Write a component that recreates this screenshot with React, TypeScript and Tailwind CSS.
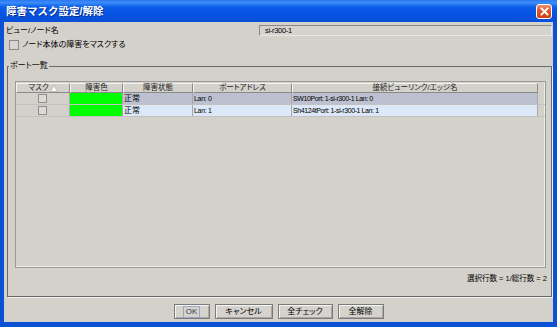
import React from 'react'

const ui = "[font-family:'Liberation_Sans','Noto_Sans_CJK_JP',sans-serif] [font-feature-settings:'palt']"

const columns = [
  { key: 'mask', label: 'マスク', w: 'w-[54px]' },
  { key: 'color', label: '障害色', w: 'w-[53px]' },
  { key: 'state', label: '障害状態', w: 'w-[70px]' },
  { key: 'addr', label: 'ポートアドレス', w: 'w-[99px]' },
  { key: 'link', label: '接続ビューリンク/エッジ名', w: 'w-[246px]' },
]

const rows = [
  { state: '正常', addr: 'Lan: 0', link: 'SW10Port: 1-si-r300-1 Lan: 0', bg: 'bg-[#bdc1cf]' },
  { state: '正常', addr: 'Lan: 1', link: 'Sh4124tPort: 1-si-r300-1 Lan: 1', bg: 'bg-[#dce8f7]' },
]

function SmallCheck() {
  return <span className="block w-[9px] h-[9px] border border-[#8e8e8e] bg-[#dcdad6]" />
}

function SortUp() {
  return (
    <svg width="8" height="7" viewBox="0 0 8 7" className="ml-[1px]">
      <polygon points="4,0.5 7.5,6.5 0.5,6.5" fill="#ffffff" stroke="#b0b0b0" strokeWidth="0.8" />
    </svg>
  )
}

function Button({ children, focus, w }: { children: React.ReactNode; focus?: boolean; w: string }) {
  return (
    <button className={`${ui} ${w} h-[15px] flex items-center justify-center border border-[#7b7b7b] bg-[#d6d3ce] shadow-[inset_1px_1px_0_#f4f4f4,inset_-1px_-1px_0_#a8a8a8] text-[8px] leading-none text-black px-0`}>
      {focus ? (
        <span className="px-[2px] py-[1px] outline outline-1 outline-[#9aa6c8] text-[#3a3a3a]">{children}</span>
      ) : (
        children
      )}
    </button>
  )
}

export default function App() {
  return (
    <div className={`${ui} w-[557px] h-[327px] flex flex-col bg-[#0b51d4] overflow-hidden`}>
      {/* title bar */}
      <div className="h-[22px] shrink-0 flex items-center pl-[6px] pr-[5px] bg-[linear-gradient(to_bottom,#2a78f0_0%,#3b8cf8_12%,#0c5ee8_32%,#0553e2_65%,#0a4fd6_100%)]">
        <span className="text-white font-bold text-[10.5px] leading-none [font-feature-settings:normal] [text-shadow:1px_1px_0_#0a2f90]">
          障害マスク設定/解除
        </span>
        <div className="ml-auto w-[16px] h-[15px] rounded-[3px] border border-white bg-[linear-gradient(to_bottom,#f09070,#e0552c_45%,#d04018)] flex items-center justify-center">
          <svg width="9" height="9" viewBox="0 0 9 9">
            <path d="M1.5 1.5 L7.5 7.5 M7.5 1.5 L1.5 7.5" stroke="#ffffff" strokeWidth="1.8" strokeLinecap="square" />
          </svg>
        </div>
      </div>

      {/* body */}
      <div className="flex-1 mx-[4px] mb-[5px] bg-[#d4d1cb] flex flex-col text-black">
        <div className="mt-[3px] h-[11px] flex items-center">
          <span className="pl-[2px] text-[8px] leading-none">ビュー/ノード名</span>
          <div className="ml-auto mr-[1px] w-[293px] h-[11px] border border-[#8a8a8a] border-r-[#e8e8e8] border-b-[#e8e8e8] bg-[#d6d3ce] flex items-center pl-[5px] text-[7.5px] leading-none tracking-[-0.3px]">
            si-r300-1
          </div>
        </div>

        <div className="mt-[4px] h-[10px] flex items-center pl-[5px]">
          <span className="block w-[10px] h-[10px] border border-[#8a8a8a] bg-[#d8d6d2]" />
          <span className="ml-[3px] text-[8px] leading-none">ノード本体の障害をマスクする</span>
        </div>

        <fieldset className="mt-[12px] ml-[3px] mr-[1px] h-[235px] border border-[#6a6a6a] shadow-[1px_1px_0_#f2f2f2] flex flex-col">
          <legend className="ml-[1px] px-[1px] text-[8px] leading-[8px]">ポート一覧</legend>

          <div className="mt-[11px] ml-[7px] mr-[5px] h-[187px] border border-[#9a9a9a] shadow-[inset_-1px_-1px_0_#ececec] bg-[#d4d1cb] pt-[1px]">
            <div className="flex h-[10px]">
              {columns.map((c) => (
                <div
                  key={c.key}
                  className={`${c.w} shrink-0 flex items-center justify-center border-t border-l border-t-[#f4f4f4] border-l-[#f4f4f4] border-r border-b border-r-[#8a8a8a] border-b-[#8a8a8a] text-[7.5px] leading-none text-[#222]`}
                >
                  {c.label}
                  {c.key === 'mask' && <SortUp />}
                </div>
              ))}
            </div>
            {rows.map((r, i) => (
              <div key={i} className="flex h-[12px] border-b border-[#c2c2c2]">
                <div className="w-[54px] shrink-0 flex items-center justify-center border-r border-[#a8a8a8] bg-[#d4d1cb]">
                  <SmallCheck />
                </div>
                <div className="w-[53px] shrink-0 border-r border-[#a8a8a8] bg-[#00ff00]" />
                <div className={`w-[70px] shrink-0 flex items-center pl-[1px] border-r border-[#a8a8a8] ${r.bg} text-[8px] leading-none`}>
                  {r.state}
                </div>
                <div className={`w-[99px] shrink-0 flex items-center pl-[1px] border-r border-[#a8a8a8] ${r.bg} text-[7px] leading-none tracking-[-0.3px]`}>
                  {r.addr}
                </div>
                <div className={`w-[246px] shrink-0 flex items-center pl-[1px] border-r border-[#a8a8a8] ${r.bg} text-[7px] leading-none tracking-[-0.4px]`}>
                  {r.link}
                </div>
              </div>
            ))}
          </div>

          <div className="mt-[6px] h-[10px] flex items-center justify-end pr-[4px] text-[7.5px] leading-none">
            選択行数 = 1/総行数 = 2
          </div>
        </fieldset>

        <div className="mt-[7px] flex justify-center gap-[5px]">
          <Button focus w="w-[36px]">OK</Button>
          <Button w="w-[58px]">キャンセル</Button>
          <Button w="w-[55px]">全チェック</Button>
          <Button w="w-[46px]">全解除</Button>
        </div>
      </div>
    </div>
  )
}
